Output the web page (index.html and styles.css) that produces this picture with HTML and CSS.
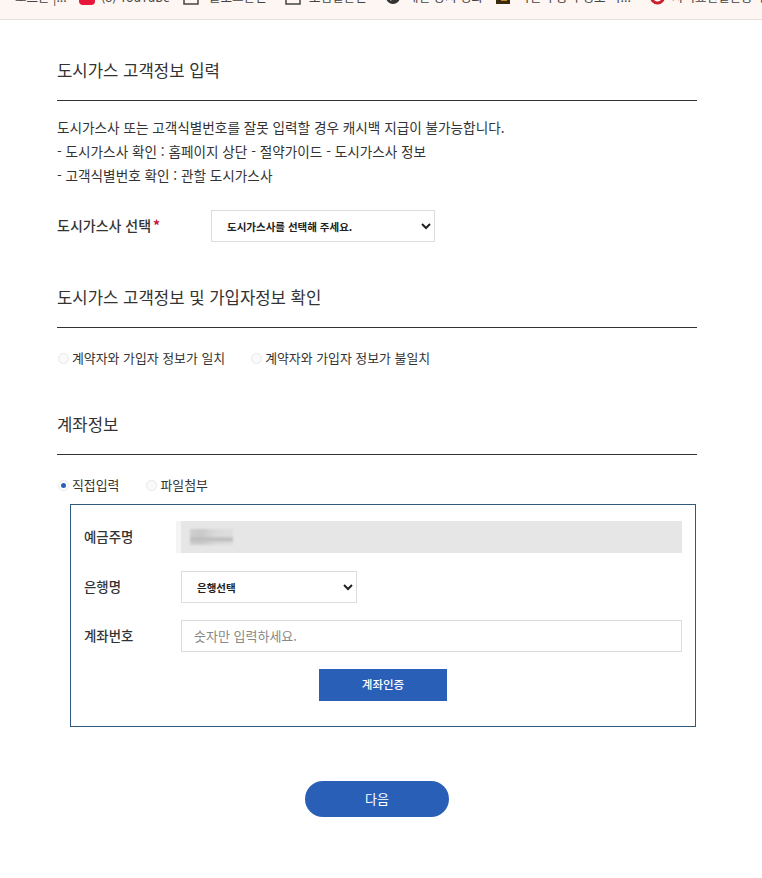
FILE: index.html
```html
<!DOCTYPE html>
<html lang="ko">
<head>
<meta charset="utf-8">
<title>도시가스 고객정보 입력</title>
<link rel="stylesheet" href="styles.css">
</head>
<body>
<nav class="bookmarks">
  <span class="bm bm-first">ㅗ 모르는 |...</span>
  <span class="bm bm-yt"><svg class="ic" viewBox="0 0 16 16"><rect width="16" height="16" rx="4" fill="#e8173a"/></svg>(8) YouTube</span>
  <span class="bm bm-f1"><svg class="ic ic-f1" viewBox="0 0 16 16"><path d="M1 0v15h14V0" fill="none" stroke="#444" stroke-width="1.5"/></svg>블로그관련</span>
  <span class="bm bm-f2"><svg class="ic ic-f2" viewBox="0 0 16 16"><path d="M1 0v15h14V0" fill="none" stroke="#444" stroke-width="1.5"/></svg>보험일관련</span>
  <span class="bm bm-c"><svg class="ic ic-14" viewBox="0 0 14 14"><circle cx="7" cy="7" r="7" fill="#333"/><path d="M4 11l6-3-3-3z" fill="#eee"/></svg>해킨 당시 영화</span>
  <span class="bm bm-i"><svg class="ic ic-i" viewBox="0 0 14 14"><rect width="14" height="14" fill="#3b2a10"/><rect x="5" y="3" width="6" height="8" fill="#c08a20"/></svg>국민의 등록 정보 국...</span>
  <span class="bm bm-p"><svg class="ic ic-15" viewBox="0 0 15 15"><circle cx="7.5" cy="7" r="6" fill="#fff" stroke="#c9202c" stroke-width="3"/></svg>자의표현일반등록</span>
</nav>
<main class="page">
  <section class="sec sec-gas">
    <h2 class="sec-title">도시가스 고객정보 입력</h2>
    <div class="notice">
      <p>도시가스사 또는 고객식별번호를 잘못 입력할 경우 캐시백 지급이 불가능합니다.</p>
      <p>- 도시가스사 확인 : 홈페이지 상단 - 절약가이드 - 도시가스사 정보</p>
      <p>- 고객식별번호 확인 : 관할 도시가스사</p>
    </div>
    <div class="gas-row">
      <label class="gas-label">도시가스사 선택<span class="req">*</span></label>
      <select class="sel sel-gas"><option>도시가스사를 선택해 주세요.</option></select>
    </div>
  </section>
  <section class="sec sec-check">
    <h2 class="sec-title">도시가스 고객정보 및 가입자정보 확인</h2>
    <div class="radios radios-check">
      <label class="radio"><span class="dot"></span>계약자와 가입자 정보가 일치</label>
      <label class="radio"><span class="dot"></span>계약자와 가입자 정보가 불일치</label>
    </div>
  </section>
  <section class="sec sec-acct">
    <h2 class="sec-title">계좌정보</h2>
    <div class="radios radios-acct">
      <label class="radio"><span class="dot dot-on"></span>직접입력</label>
      <label class="radio"><span class="dot"></span>파일첨부</label>
    </div>
    <div class="box">
      <div class="row row-name">
        <span class="row-label">예금주명</span>
        <div class="field field-off"><span class="blur"></span></div>
      </div>
      <div class="row">
        <span class="row-label">은행명</span>
        <select class="sel sel-bank"><option>은행선택</option></select>
      </div>
      <div class="row">
        <span class="row-label">계좌번호</span>
        <input class="field field-in" type="text" placeholder="숫자만 입력하세요.">
      </div>
      <div class="verify"><button class="btn-verify" type="button">계좌인증</button></div>
    </div>
  </section>
  <div class="next"><button class="btn-next" type="button">다음</button></div>
</main>
</body>
</html>
```
FILE: styles.css
```css
* { box-sizing: border-box; }
html, body { margin: 0; padding: 0; background: #fff; }
body { font-family: "Noto Sans CJK KR", "Noto Sans", sans-serif; color: #333; height: 878px; overflow: hidden; }

.bookmarks { display: flex; height: 20px; background: #fdf6f2; border-bottom: 1px solid #e4e1dd; overflow: hidden; align-items: flex-end; padding-bottom: 14px; font-size: 12.5px; line-height: 16px; color: #444; white-space: nowrap; }
.bm { display: flex; align-items: center; flex: none; height: 16px; }
.ic { width: 16px; height: 16px; margin-right: 6px; flex: none; }
.ic-f1 { margin-right: 10px; }
.ic-f2 { margin-right: 8px; }
.ic-14 { width: 14px; height: 14px; margin-right: 7px; }
.ic-i { width: 14px; height: 14px; margin-right: 8px; }
.ic-15 { width: 15px; height: 15px; margin-right: 7px; }
.bm-first { width: 79px; }
.bm-yt { width: 104px; }
.bm-f1 { width: 102px; }
.bm-f2 { width: 101px; }
.bm-c { width: 110px; }
.bm-i { width: 154px; }

.page { padding-left: 57px; width: 697px; }
.sec-title { margin: 0; font-size: 16.7px; font-weight: 400; line-height: 24px; color: #333; padding-bottom: 18px; border-bottom: 1px solid #333; }
.sec-gas { padding-top: 38px; }
.notice { margin-top: 14px; font-size: 13.62px; line-height: 24px; }
.notice p { margin: 0; }
.gas-row { display: flex; align-items: center; margin-top: 23px; }
.gas-label { width: 154px; font-size: 14px; font-weight: 500; padding-bottom: 2px; }
.req { color: #c8103c; margin-left: 2px; font-weight: 700; }
.sel { height: 32px; background: #fff; border: 1px solid #dcdcdc; font-family: inherit; font-size: 10.5px; font-weight: 700; color: #222; padding-left: 11px; border-radius: 0; }
.sel-gas { width: 224px; }
.sel-bank { width: 176px; }
.sec-check { margin-top: 43px; }
.radios { display: flex; font-size: 12.9px; line-height: 20px; }
.radio { display: flex; align-items: center; }
.dot { width: 11px; height: 11px; border-radius: 50%; border: 1px solid #e8e8e8; background: #fafafa; margin-right: 3px; flex: none; position: relative; }
.dot-on { background: #fff; }
.dot-on::after { content: ""; position: absolute; inset: 2px; border-radius: 50%; background: #2a5fb8; }
.radios-check { margin-top: 20px; gap: 26px; padding-left: 1px; padding-bottom: 1px; }
.sec-acct { margin-top: 43px; }
.radios-acct { margin-top: 20px; gap: 27px; padding-left: 1px; padding-bottom: 1px; }
.box { margin-top: 8px; margin-left: 13px; width: 626px; height: 223px; border: 1px solid #2f5a7e; padding: 16px 13px 0; }
.row { display: flex; align-items: center; height: 32px; margin-bottom: 17px; }
.row-name { margin-bottom: 18px; }
.row-label { width: 97px; font-size: 13.4px; font-weight: 500; padding-bottom: 2px; }
.field { width: 501px; height: 32px; border: 1px solid #dcdcdc; background: #fff; font-family: inherit; }
.field-off { background: #e6e6e6; border-color: #e6e6e6; box-shadow: -5px 0 0 #f4f4f4; display: flex; align-items: center; padding-left: 8px; }
.blur { width: 43px; height: 16px; background: linear-gradient(180deg, rgba(0,0,0,0) 48%, #bcbcbc 58%, #c2c2c2 74%, rgba(0,0,0,0) 84%), linear-gradient(90deg, #cfcfcf, #c9c9c9 25%, #dadada 60%, #dddddd); filter: blur(1px); }
.field-in { font-size: 13px; padding: 0 12px 2px; border-radius: 0; outline: none; }
.field-in::placeholder { color: #888; opacity: 1; }
.verify { display: flex; justify-content: center; }
.btn-verify { width: 128px; height: 32px; border: 0; background: #2a5fb8; color: #fff; font-family: inherit; font-size: 11.5px; font-weight: 500; padding: 0 0 2px; }
.next { display: flex; justify-content: center; margin-top: 54px; }
.btn-next { width: 144px; height: 36px; border: 0; border-radius: 18px; background: #2a5fb8; color: #fff; font-family: inherit; font-size: 13px; padding: 0 0 2px; }
```
